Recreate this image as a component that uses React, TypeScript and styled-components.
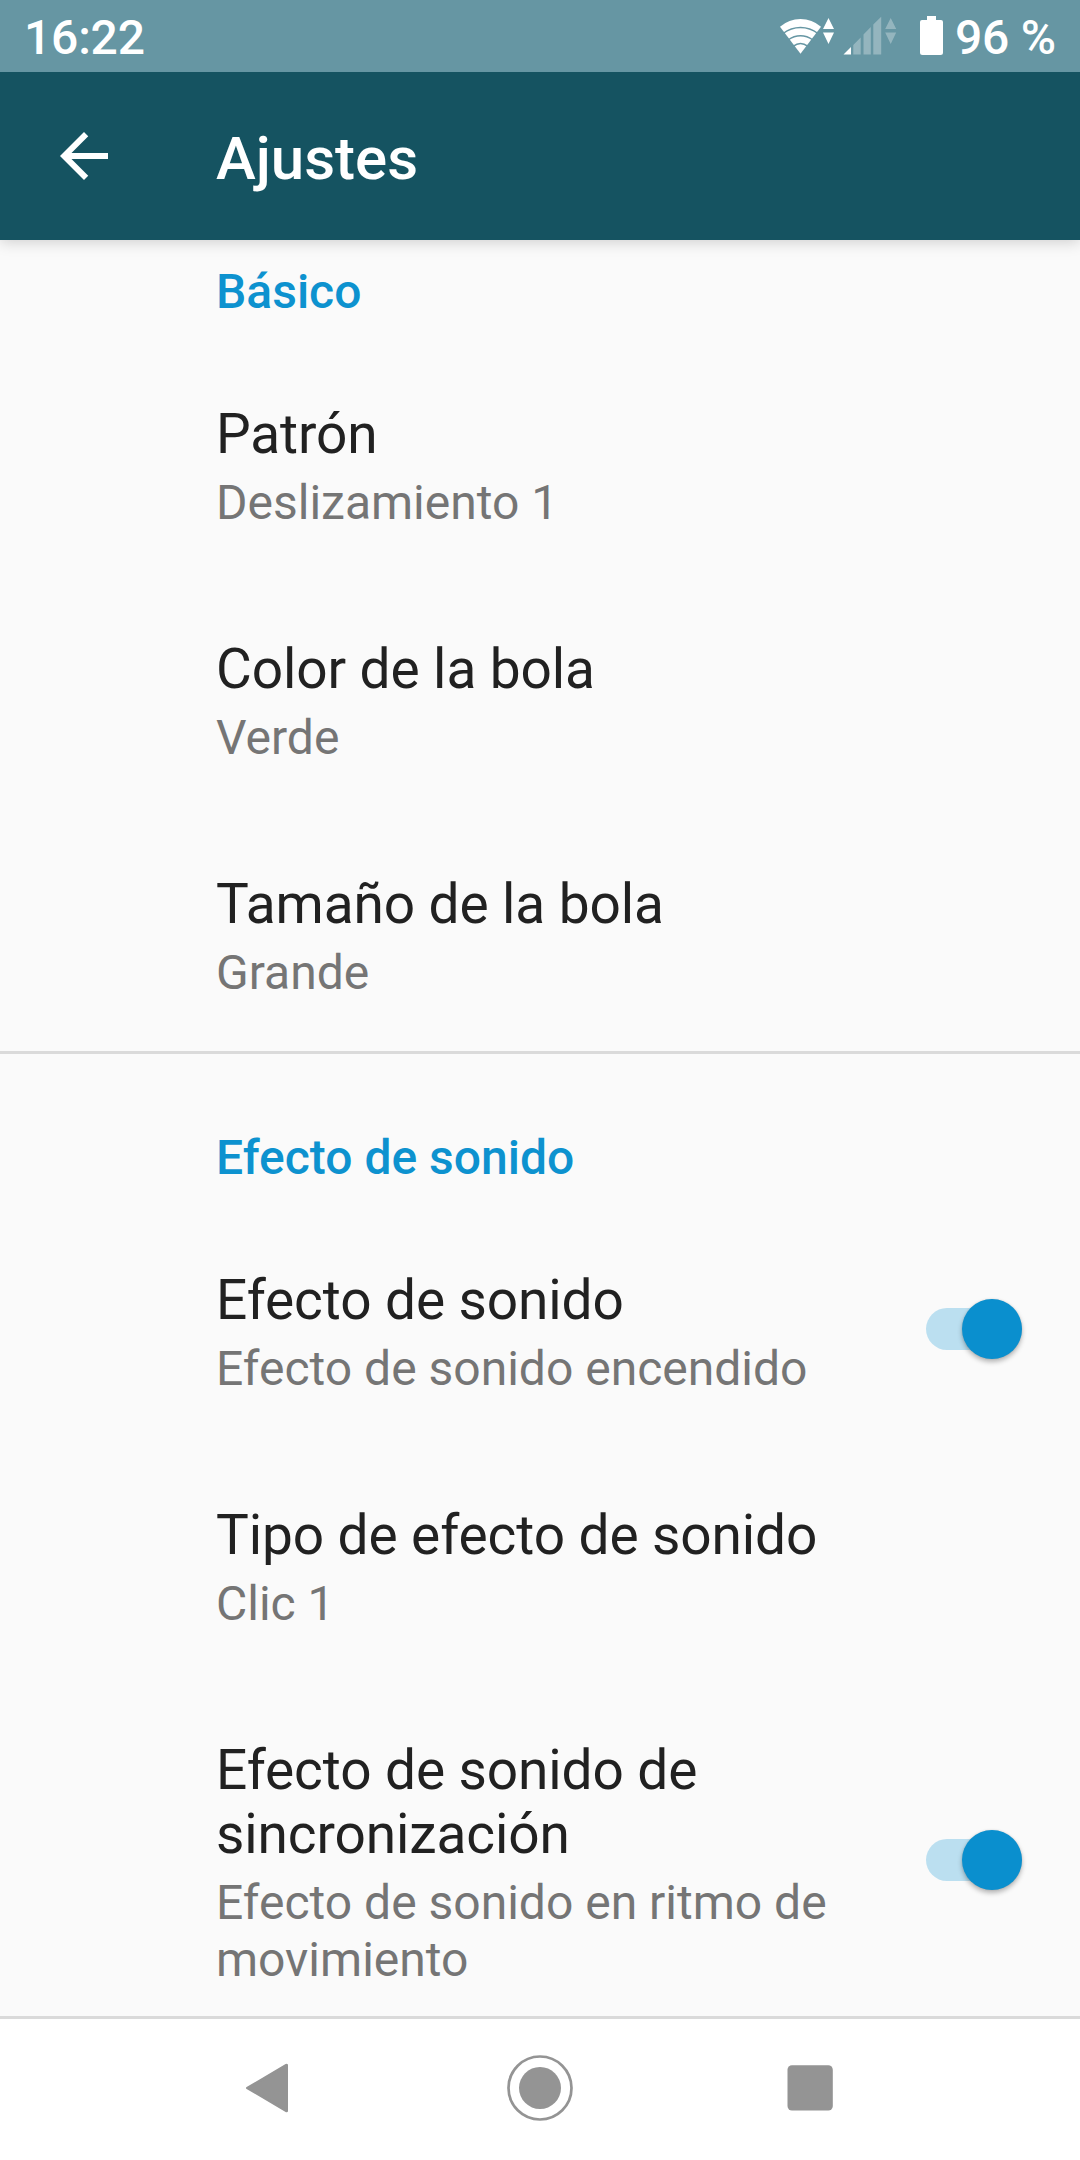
import React, { useState } from "react";
import styled, { createGlobalStyle } from "styled-components";

const GlobalStyle = createGlobalStyle`
  * {
    box-sizing: border-box;
  }
  body {
    margin: 0;
    background: #fafafa;
    font-family: Roboto, "Noto Sans", sans-serif;
  }
`;

const Screen = styled.div`
  display: flex;
  flex-direction: column;
  width: 1080px;
  height: 2160px;
  overflow: hidden;
  background: #fafafa;
`;

const StatusBar = styled.div`
  flex: none;
  display: flex;
  align-items: center;
  justify-content: space-between;
  height: 72px;
  padding: 2px 24px 0;
  background: #6696a3;
  color: #fff;
  font-size: 48px;
  font-weight: 500;
  letter-spacing: -0.2px;
  line-height: 57px;
  z-index: 2;
`;

const StatusIcons = styled.div`
  display: flex;
  align-items: center;
`;

const StatusSvg = styled.svg`
  display: block;
  margin: -2px 10px 0 0;
`;

const AppBar = styled.header`
  flex: none;
  display: flex;
  align-items: center;
  height: 168px;
  padding-left: 48px;
  background: #155361;
  color: #fff;
  box-shadow: 0 2px 14px rgba(0, 0, 0, 0.18);
  z-index: 1;
`;

const BackButton = styled.button`
  display: flex;
  width: 168px;
  padding: 0;
  border: 0;
  background: none;
`;

const Title = styled.h1`
  margin: 5px 0 0;
  font-size: 60px;
  font-weight: 500;
  line-height: 70px;
`;

const List = styled.main`
  flex: 1;
  min-height: 0;
  overflow: hidden;
`;

const Section = styled.section`
  & + & {
    border-top: 3px solid #dadada;
  }
`;

const SectionTitle = styled.h2<{ $first: boolean }>`
  margin: 0;
  padding: ${(props) => (props.$first ? "23px" : "75px")} 0 26px 216px;
  color: #0d92cf;
  font-size: 48px;
  font-weight: 500;
  line-height: 57px;
`;

const Row = styled.div`
  display: flex;
  align-items: center;
  justify-content: space-between;
  padding: 56px 58px 50px 216px;
`;

const RowText = styled.div`
  width: 640px;
`;

const RowTitle = styled.div`
  margin-bottom: 8px;
  color: #212121;
  font-size: 55px;
  letter-spacing: -0.1px;
  line-height: 64px;
`;

const RowSummary = styled.div`
  color: #757575;
  font-size: 48px;
  line-height: 57px;
`;

const Track = styled.button<{ $on: boolean }>`
  display: flex;
  align-items: center;
  justify-content: ${(props) => (props.$on ? "flex-end" : "flex-start")};
  width: 96px;
  height: 42px;
  margin-bottom: 7px;
  padding: 0;
  border: 0;
  border-radius: 21px;
  background: ${(props) => (props.$on ? "#bbdff0" : "#b9b9b9")};
`;

const Thumb = styled.span<{ $on: boolean }>`
  flex: none;
  width: 60px;
  height: 60px;
  border-radius: 50%;
  background: ${(props) => (props.$on ? "#0a8fce" : "#f1f1f1")};
  box-shadow: 0 3px 5px rgba(0, 0, 0, 0.28), 0 0 2px rgba(0, 0, 0, 0.12);
`;

const NavBar = styled.nav`
  flex: none;
  display: flex;
  align-items: center;
  justify-content: space-between;
  height: 144px;
  padding: 0 234px 3px;
  border-top: 3px solid #dadada;
  background: #fff;
`;

type Setting = {
  title: string;
  summary: string;
  toggle?: boolean;
};

const sections: { title: string; items: Setting[] }[] = [
  {
    title: "Básico",
    items: [
      { title: "Patrón", summary: "Deslizamiento 1" },
      { title: "Color de la bola", summary: "Verde" },
      { title: "Tamaño de la bola", summary: "Grande" },
    ],
  },
  {
    title: "Efecto de sonido",
    items: [
      { title: "Efecto de sonido", summary: "Efecto de sonido encendido", toggle: true },
      { title: "Tipo de efecto de sonido", summary: "Clic 1" },
      {
        title: "Efecto de sonido de sincronización",
        summary: "Efecto de sonido en ritmo de movimiento",
        toggle: true,
      },
    ],
  },
];

// wifi, mobile signal and battery
const SystemIcons: React.FC = () => (
  <StatusSvg width="166" height="40" viewBox="779 16 166 40" fill="#fff">
    <path d="M780 26.7Q789 19 800.5 19T821 26.7L800.5 53.7Z" />
    <g fill="none" stroke="#6696a3" strokeWidth="1.5">
      <path d="M783 33.5Q791 27.6 800.5 27.6T818 33.5" />
      <path d="M788 40Q794 35.8 800.5 35.8T813 40" />
      <path d="M793 46.3Q797 43.4 800.5 43.4T808 46.3" />
    </g>
    <path d="M828.5 18L834 29H823ZM823 32.5H834L828.5 44Z" />
    <path d="M843.5 54.5L851 47V54.5Z" />
    <g fillOpacity="0.3">
      <path d="M853.3 54.5V45L860.7 37.5V54.5ZM863.5 54.5V34.5L870.8 27V54.5ZM873.3 54.5V24.5L881.2 16.7V54.5Z" />
      <path d="M890.7 18L896.2 29H885.2ZM885.2 32.5H896.2L890.7 44Z" />
    </g>
    <path d="M927 16H936V20H941Q943 20 943 22V52.5Q943 55 940.5 55H922.5Q920 55 920 52.5V22Q920 20 922 20H927Z" />
  </StatusSvg>
);

const Switch: React.FC = () => {
  const [on, setOn] = useState(true);

  return (
    <Track type="button" role="switch" aria-checked={on} $on={on} onClick={() => setOn(!on)}>
      <Thumb $on={on} />
    </Track>
  );
};

const App: React.FC = () => {
  return (
    <>
      <GlobalStyle />
      <Screen>
        <StatusBar>
          <span>16:22</span>
          <StatusIcons>
            <SystemIcons />
            <span>96 %</span>
          </StatusIcons>
        </StatusBar>
        <AppBar>
          <BackButton type="button" aria-label="Atrás">
            <svg width="72" height="72" viewBox="0 0 24 24" fill="#fff">
              <path d="M20 11H7.83l5.59-5.59L12 4l-8 8 8 8 1.41-1.41L7.83 13H20v-2z" />
            </svg>
          </BackButton>
          <Title>Ajustes</Title>
        </AppBar>
        <List>
          {sections.map((section, index) => (
            <Section key={section.title}>
              <SectionTitle $first={index === 0}>{section.title}</SectionTitle>
              {section.items.map((item) => (
                <Row key={item.title}>
                  <RowText>
                    <RowTitle>{item.title}</RowTitle>
                    <RowSummary>{item.summary}</RowSummary>
                  </RowText>
                  {item.toggle && <Switch />}
                </Row>
              ))}
            </Section>
          ))}
        </List>
        <NavBar>
          <svg width="72" height="72" viewBox="234 2052 72 72">
            <path
              d="M247.5 2088L286.5 2058.5V2117.5Z"
              transform="translate(0 459.4) scale(1 0.78)"
              fill="#949494"
              stroke="#949494"
              strokeWidth="3"
              strokeLinejoin="round"
            />
          </svg>
          <svg width="72" height="72" viewBox="504 2052 72 72">
            <circle cx="540" cy="2088" r="31.5" fill="none" stroke="#949494" strokeWidth="2.7" />
            <circle cx="540" cy="2088" r="21" fill="#949494" />
          </svg>
          <svg width="72" height="72" viewBox="774 2052 72 72">
            <rect x="787.5" y="2065.3" width="45.3" height="45.3" rx="4.5" fill="#949494" />
          </svg>
        </NavBar>
      </Screen>
    </>
  );
};

export default App;
